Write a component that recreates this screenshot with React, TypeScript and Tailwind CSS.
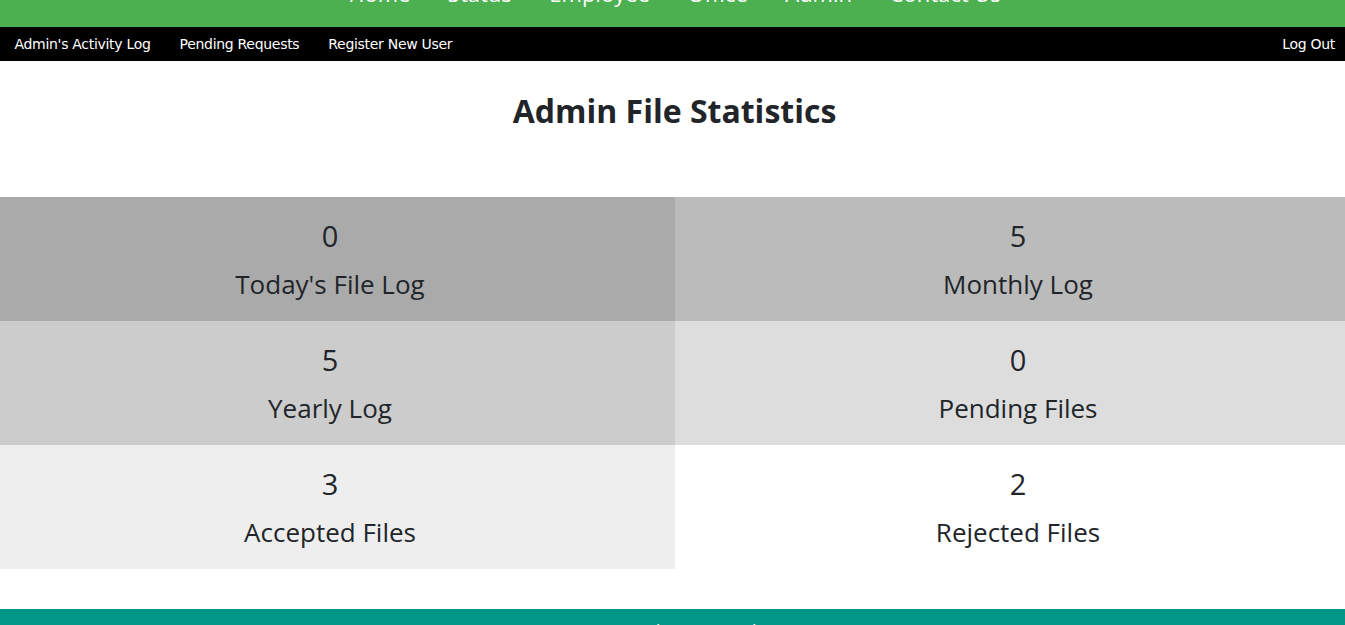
const topNav = ["Home", "Status", "Employee", "Office", "Admin", "Contact Us"];

const adminNav = ["Admin's Activity Log", "Pending Requests", "Register New User"];

const stats = [
  { value: 0, label: "Today's File Log", bg: "bg-[#aaaaaa]", pad: "pr-[15px]" },
  { value: 5, label: "Monthly Log", bg: "bg-[#bbbbbb]", pad: "pl-[16px]" },
  { value: 5, label: "Yearly Log", bg: "bg-[#cccccc]", pad: "pr-[15px]" },
  { value: 0, label: "Pending Files", bg: "bg-[#dddddd]", pad: "pl-[16px]" },
  { value: 3, label: "Accepted Files", bg: "bg-[#eeeeee]", pad: "pr-[15px]" },
  { value: 2, label: "Rejected Files", bg: "bg-white", pad: "pl-[16px]" },
];

export default function App() {
  return (
    <div className="h-[625px] overflow-hidden bg-white font-['Open_Sans',sans-serif] text-[#212529]">
      {/* page is scrolled a bit, header title sits above the fold */}
      <div className="-mt-[60px]">
        <header className="h-[87px] overflow-hidden bg-[#4caf50] text-white">
          <div className="h-[42px]" />
          <nav className="flex justify-center gap-[37.5px] pl-[4px] text-[22px] leading-[23px]">
            {topNav.map((t) => (
              <a key={t} href="#">
                {t}
              </a>
            ))}
          </nav>
        </header>

        {/* Admin bar */}
        <div className="flex h-[34px] items-center bg-black font-['DejaVu_Sans',sans-serif] text-[14px] text-white tracking-[-0.3px]">
          {adminNav.map((t) => (
            <a key={t} href="#" className="px-[14.5px]">
              {t}
            </a>
          ))}
          <a href="#" className="ml-auto px-[10px]">
            Log Out
          </a>
        </div>

        <main>
          <h1 className="pt-[30px] pb-[66px] pl-[4px] text-center text-[32px] font-bold leading-[40px]">
            Admin File Statistics
          </h1>

          <div className="grid grid-cols-[675px_1fr]">
            {stats.map((s) => (
              <div
                key={s.label}
                className={`${s.bg} ${s.pad} flex h-[124px] flex-col items-center pt-[20px]`}
              >
                <div className="text-[29px] leading-[38px]">{s.value}</div>
                <div className="mt-[12px] text-[26px] leading-[34px]">{s.label}</div>
              </div>
            ))}
          </div>
        </main>

        <footer className="mt-[40px] bg-[#009688] pt-[8px] pb-[16px] text-center text-[19px] text-white">
          Copyright reserved
        </footer>
      </div>
    </div>
  );
}
